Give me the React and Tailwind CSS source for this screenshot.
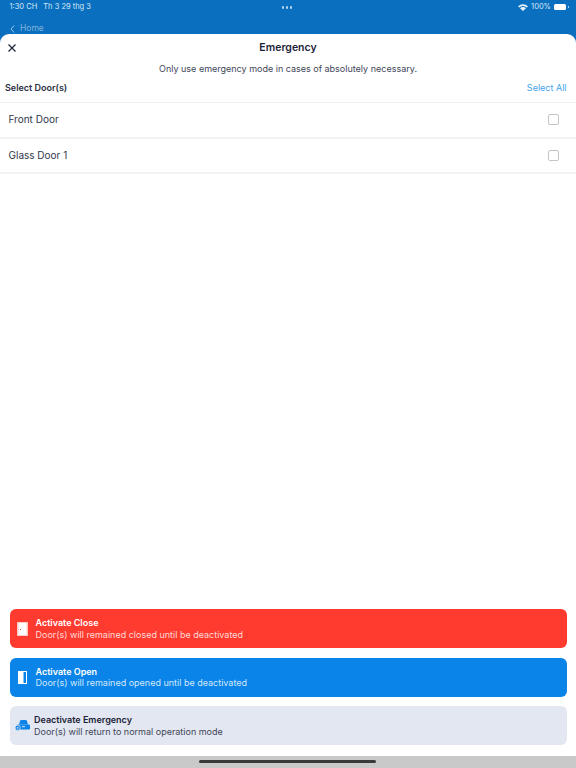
const doors = ['Front Door', 'Glass Door 1'];

function DoorClosedIcon() {
  return (
    <svg width="11" height="14" viewBox="0 0 11 14" className="shrink-0">
      <rect x="0" y="0" width="11" height="14" fill="#ffc9c4" />
      <rect x="1.5" y="1" width="8" height="12" fill="#ffffff" />
      <rect x="3" y="7" width="1" height="1" fill="#ff3b30" />
    </svg>
  );
}

function DoorOpenIcon() {
  return (
    <svg width="9" height="13" viewBox="0 0 9 13" className="shrink-0">
      <rect x="0.5" y="0.5" width="8" height="12" fill="none" stroke="#ffffff" strokeWidth="1" />
      <path d="M0 0 L5.5 1 L5.5 12 L0 13 Z" fill="#ffffff" />
    </svg>
  );
}

function CarIcon() {
  return (
    <svg width="15" height="11" viewBox="0 0 15 11" className="shrink-0">
      <path d="M4 4.5 L5 1 Q5.2 0 6.5 0 H10.5 Q11.8 0 12 1 L13 4.5 Z" fill="#0a84e8" />
      <rect x="2" y="4.5" width="13" height="5" rx="1.2" fill="#0a84e8" />
      <rect x="7" y="6.2" width="3" height="1" fill="#e3e7f1" />
      <circle cx="2.7" cy="7.8" r="2.6" fill="#0a84e8" stroke="#e3e7f1" strokeWidth="0.8" />
      <circle cx="2.7" cy="7.8" r="0.9" fill="#e3e7f1" />
    </svg>
  );
}

function ActionButton({ className, titleClass, subClass, icon, title, sub, gap }) {
  return (
    <button className={`flex h-[39px] w-full items-center rounded-md text-left ${className}`}>
      <span className={`flex items-center justify-center ${gap}`}>{icon}</span>
      <span className="flex flex-col">
        <span className={`text-[9px] leading-[11.5px] font-semibold ${titleClass}`}>{title}</span>
        <span className={`text-[9px] leading-[11.5px] ${subClass}`}>{sub}</span>
      </span>
    </button>
  );
}

export default function App() {
  return (
    <div className="flex h-[768px] w-[576px] flex-col overflow-hidden bg-[#0a6fbe] font-['Inter',sans-serif]">
      <div className="relative h-[34px] shrink-0">
        <div className="flex h-[14px] items-center justify-between pl-[9.5px] pr-[7px] text-[7.5px] text-[#d7e8f6]">
          <div className="flex gap-[6px]">
            <span>1:30 CH</span>
            <span>Th 3 29 thg 3</span>
          </div>
          <div className="flex items-center gap-[2px]">
            <svg width="10" height="7" viewBox="0 0 10 7" className="mr-[1px]">
              <path d="M0 2.4 A7 7 0 0 1 10 2.4 L8.8 3.6 A5.4 5.4 0 0 0 1.2 3.6 Z M2 4.3 A4.2 4.2 0 0 1 8 4.3 L5 7 Z" fill="#e6f1fa" />
            </svg>
            <span>100%</span>
            <span className="ml-[1px] h-[6px] w-[12px] rounded-[1.5px] bg-white" />
            <span className="h-[2px] w-[1px] bg-[#a9cde9]" />
          </div>
        </div>
        <div className="absolute left-[281.5px] top-[6px] flex gap-[1.5px]">
          <span className="size-[2.5px] rounded-full bg-[#b9d6ee]" />
          <span className="size-[2.5px] rounded-full bg-[#b9d6ee]" />
          <span className="size-[2.5px] rounded-full bg-[#b9d6ee]" />
        </div>
        <div className="mt-[9px] flex items-center pl-[10px] text-[8.5px] leading-[11px] text-[#7fb2dc]">
          <svg width="5" height="8" viewBox="0 0 5 8" className="mr-[5px]">
            <path d="M4.2 0.5 L1 4 L4.2 7.5" fill="none" stroke="#9cc4e4" strokeWidth="1" />
          </svg>
          <span>Home</span>
        </div>
      </div>

      <div className="flex min-h-0 flex-1 flex-col rounded-t-[9px] bg-white">
        <div className="relative flex h-[28px] shrink-0 items-center justify-center">
          <svg width="8" height="8" viewBox="0 0 8 8" className="absolute left-[8px] top-[10px]">
            <path d="M0.5 0.5 L7.5 7.5 M7.5 0.5 L0.5 7.5" stroke="#1c2338" strokeWidth="1.2" />
          </svg>
          <span className="text-[10.5px] font-semibold text-[#1c2338]">Emergency</span>
        </div>
        <p className="mt-[1px] h-[11px] text-center text-[9px] leading-[11px] text-[#3f4658]">
          Only use emergency mode in cases of absolutely necessary.
        </p>
        <div className="mt-[8px] flex h-[11px] items-center justify-between pl-[5px] pr-[9.5px] text-[9px]">
          <span className="font-semibold text-[#2a3042]">Select Door(s)</span>
          <span className="text-[#3fa2ee]">Select All</span>
        </div>
        <div className="mt-[9px] border-t border-[#f1f2f6]">
          {doors.map((door) => (
            <div key={door} className="flex h-[35.5px] items-center justify-between border-b-2 border-[#f1f2f6] pl-[8.5px] pr-[17px]">
              <span className="text-[10px] text-[#30364a]">{door}</span>
              <span className="size-[11px] rounded-[2px] border border-[#c4c4c4]" />
            </div>
          ))}
        </div>

        <div className="mt-auto flex flex-col gap-[9.5px] px-[9.5px] pb-[11px]">
          <ActionButton
            className="bg-[#ff3b30]"
            titleClass="text-white"
            subClass="text-[#ffd9d6]"
            gap="w-[26px] pl-[0.5px]"
            icon={<DoorClosedIcon />}
            title="Activate Close"
            sub="Door(s) will remained closed until be deactivated"
          />
          <ActionButton
            className="bg-[#0a84e8]"
            titleClass="text-white"
            subClass="text-[#d3e9fb]"
            gap="w-[26px] pl-[0.5px]"
            icon={<DoorOpenIcon />}
            title="Activate Open"
            sub="Door(s) will remained opened until be deactivated"
          />
          <ActionButton
            className="bg-[#e3e7f1]"
            titleClass="text-[#1c2338]"
            subClass="text-[#3f4658]"
            gap="w-[24.5px] pl-[0.5px]"
            icon={<CarIcon />}
            title="Deactivate Emergency"
            sub="Door(s) will return to normal operation mode"
          />
        </div>
      </div>

      <div className="relative h-[12px] shrink-0 bg-[#c9c9c9]">
        <div className="absolute left-[199px] top-[4px] h-[3px] w-[177px] rounded-full bg-[#3a3a3a]" />
      </div>
    </div>
  );
}
